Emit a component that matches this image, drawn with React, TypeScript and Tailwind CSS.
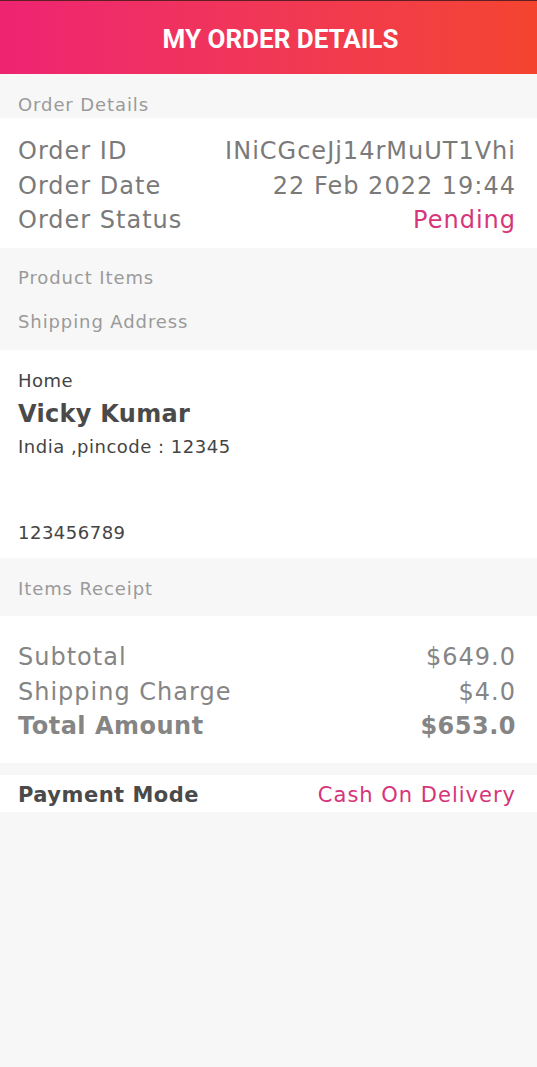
import React from "react";

const font = { fontFamily: '"DejaVu Sans", "Noto Sans", sans-serif' };

export default function App() {
  return (
    <div className="min-h-[1067px] bg-[#f7f7f7]" style={font}>
      <div className="h-[74px] flex items-center justify-center pl-[24px] pt-[3px] bg-gradient-to-r from-[#ee2372] to-[#f4442e] border-t border-[#5e1e24]">
        <h1 className="text-white text-[26px] font-bold" style={{ fontFamily: 'Roboto, "Liberation Sans", sans-serif' }}>
          MY ORDER DETAILS
        </h1>
      </div>

      <div className="h-[44px] pt-[19px] pl-[18px] pr-[21px] text-[18px] leading-[24px] tracking-[0.9px] text-[#9a9a9a]">Order Details</div>

      <div className="bg-white h-[130px] pl-[18px] pr-[21px] pt-[16px] text-[24px] leading-[34.5px] tracking-[1px] text-[#7a7a7a]">
        <div className="flex justify-between"><span>Order ID</span><span>INiCGceJj14rMuUT1Vhi</span></div>
        <div className="flex justify-between"><span>Order Date</span><span>22 Feb 2022 19:44</span></div>
        <div className="flex justify-between"><span>Order Status</span><span className="text-[#d6357a]">Pending</span></div>
      </div>

      <div className="h-[102px] pl-[18px] pr-[21px] pt-[7px] text-[18px] tracking-[0.9px] text-[#9a9a9a]">
        <div className="h-[44px] flex items-center">Product Items</div>
        <div className="h-[44px] flex items-center">Shipping Address</div>
      </div>

      <div className="bg-white h-[208px] pl-[18px] pr-[21px] pt-[19px] text-[#444] tracking-[0.5px]">
        <div className="text-[18px] leading-[24px]">Home</div>
        <div className="text-[24px] font-bold leading-[42px] tracking-[0.3px] text-[#4a4a4a]">Vicky Kumar</div>
        <div className="text-[18px] leading-[24px]">India ,pincode : 12345</div>
        <div className="h-[62px]" />
        <div className="text-[18px] leading-[24px]">123456789</div>
      </div>

      <div className="h-[58px] flex items-center pt-[3px] pl-[18px] pr-[21px] text-[18px] tracking-[0.9px] text-[#9a9a9a]">Items Receipt</div>

      <div className="bg-white h-[147px] pl-[18px] pr-[21px] pt-[24px] text-[24px] leading-[34.5px] tracking-[1px] text-[#858585]">
        <div className="flex justify-between"><span>Subtotal</span><span>$649.0</span></div>
        <div className="flex justify-between"><span>Shipping Charge</span><span>$4.0</span></div>
        <div className="flex justify-between font-bold tracking-[0.5px]"><span>Total Amount</span><span>$653.0</span></div>
      </div>

      <div className="h-[12px]" />

      <div className="bg-white h-[37px] pl-[18px] pr-[21px] pt-[4px] flex items-center justify-between text-[21px]">
        <span className="font-bold tracking-[0.5px] text-[#4a4a4a]">Payment Mode</span>
        <span className="tracking-[1px] text-[#d6357a]">Cash On Delivery</span>
      </div>
    </div>
  );
}
